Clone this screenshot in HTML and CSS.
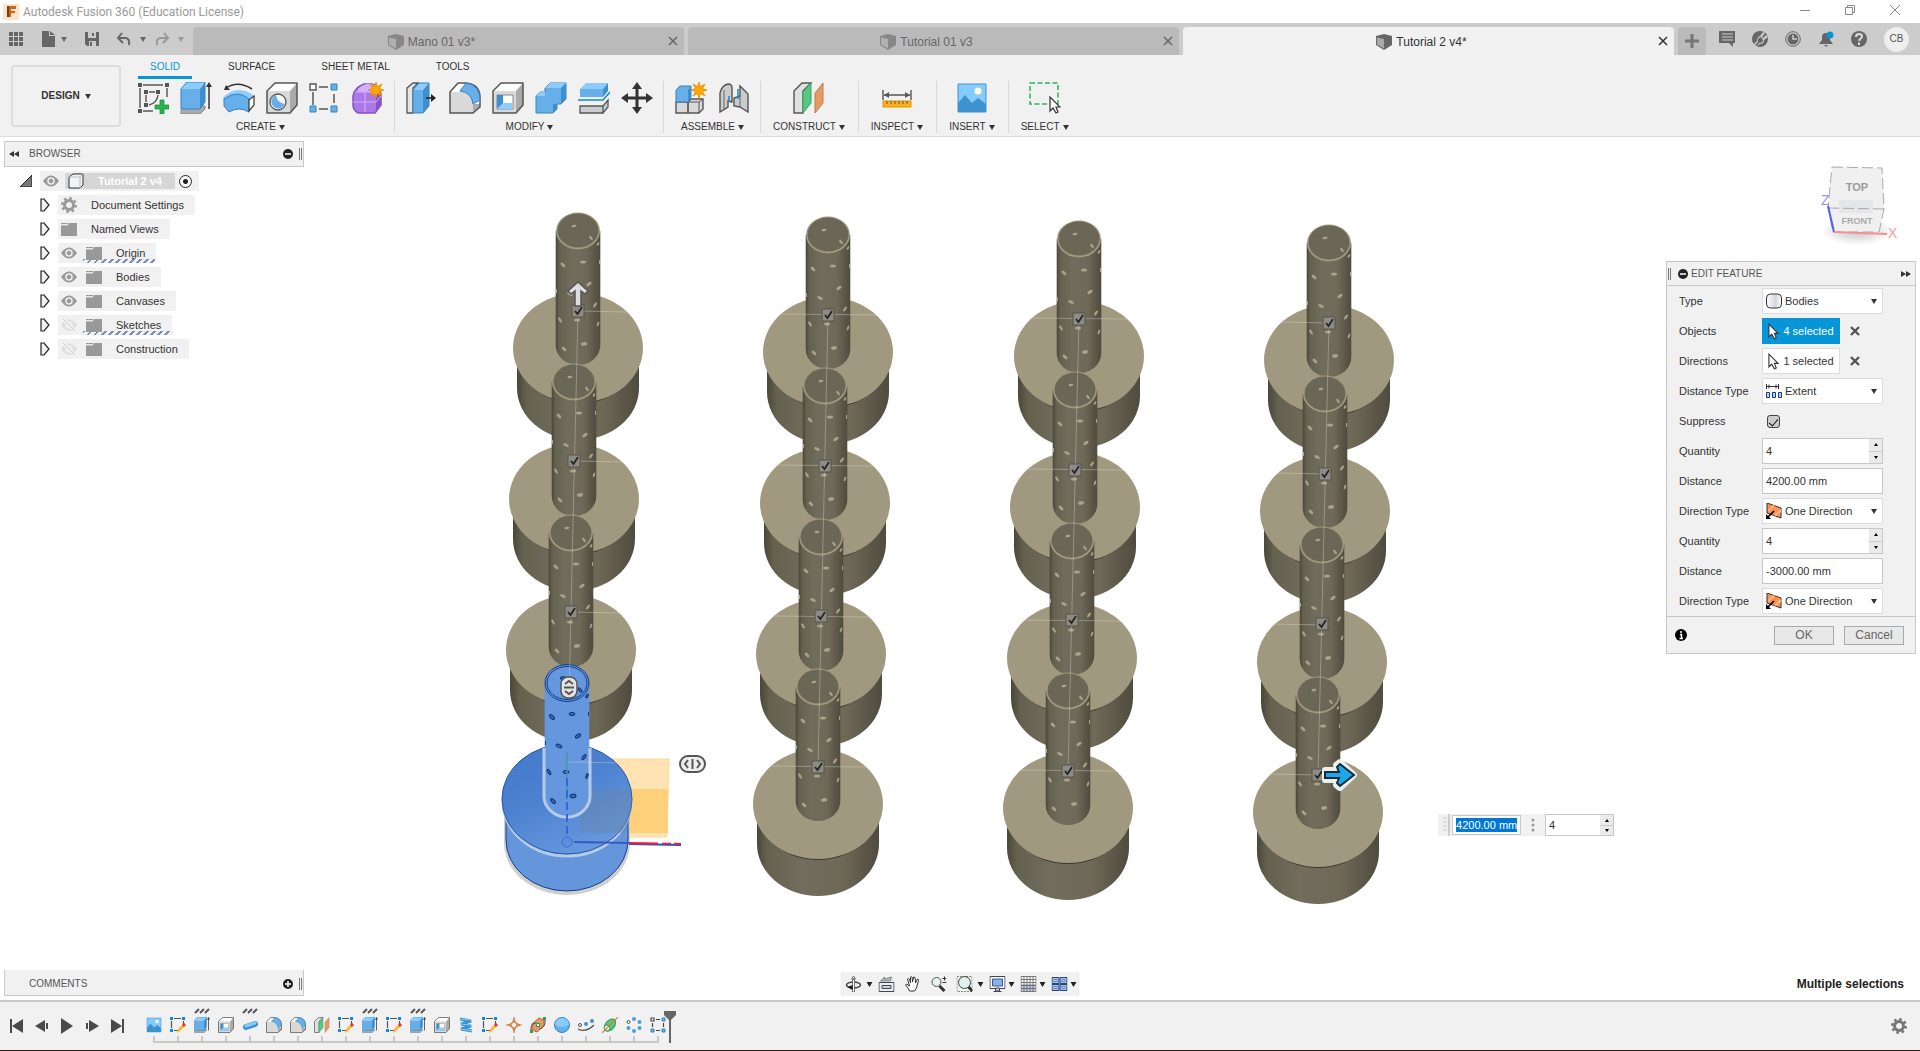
FILE: index.html
```html
<!DOCTYPE html>
<html lang="en">
<head>
<meta charset="utf-8">
<title>Autodesk Fusion 360 (Education License)</title>
<link rel="stylesheet" href="styles.css">
</head>
<body>
<svg class="defs" aria-hidden="true">
  <defs>
    <linearGradient id="wall"><stop offset="0" stop-color="#4a473a"/><stop offset=".08" stop-color="#65614f"/><stop offset=".35" stop-color="#716d5d"/><stop offset=".7" stop-color="#6e6857"/><stop offset="1" stop-color="#4f4b3e"/></linearGradient>
    <linearGradient id="blueTop" x2=".6" y2="1"><stop offset="0" stop-color="#4178c8"/><stop offset=".5" stop-color="#4c82d0"/><stop offset="1" stop-color="#6798df"/></linearGradient>
    <linearGradient id="greyBody"><stop offset="0" stop-color="#fff"/><stop offset=".6" stop-color="#d3d6da"/><stop offset="1" stop-color="#fff"/></linearGradient>
    <radialGradient id="cubeShade"><stop offset="0" stop-color="#888" stop-opacity=".5"/><stop offset="1" stop-color="#888" stop-opacity="0"/></radialGradient>
  </defs>
  <symbol id="i-cube" viewBox="0 0 16 16"><path d="M0 2 8 0l8 2v9l-8 5-8-5z" fill="#666"/><path d="M1 3.500 8 5v9.500L1 10.500z" fill="#aaa"/></symbol>
  <symbol id="i-x" viewBox="0 0 10 10"><path d="M1 1l8 8M9 1 1 9" stroke="currentColor" stroke-width="1.500"/></symbol>
  <symbol id="i-xbold" viewBox="0 0 10 10"><path d="M1 1l8 8M9 1 1 9" stroke="#555" stroke-width="2.400"/></symbol>
  <symbol id="i-caret" viewBox="0 0 6 5"><path d="M0 0h6L3 5z" fill="currentColor"/></symbol>
  <symbol id="i-up" viewBox="0 0 4 3"><path d="M0 3h4L2 0z" fill="#000"/></symbol>
  <symbol id="i-down" viewBox="0 0 4 3"><path d="M0 0h4L2 3z" fill="#000"/></symbol>
  <symbol id="i-sketch" viewBox="0 0 32 32"><path d="M3 6v20M30 6v9M6 3h20M6 29h10" fill="none" stroke="#555" stroke-width="1.400"/><path d="M1 1h4v4H1zM28 1h4v4h-4zM1 27h4v4H1zM7 8h4v4H7zM19 8h4v4h-4zM7 21h4v4H7z" fill="#555"/><path d="M9 13v7M12 10h6M21 13q-1 8-9 10" fill="none" stroke="#555" stroke-width="1.400"/><path d="M23 18h4v5h5v4h-5v5h-4v-5h-5v-4h5z" fill="#29b352" stroke="#148a38" stroke-width=".7"/></symbol>
  <symbol id="i-extrude" viewBox="0 0 32 32"><path d="M1 28l4-4h20v3l-5 5H1z" fill="#aaa" stroke="#888"/><path d="M1 7l6-7h18l-5 7z" fill="#8cccff"/><path d="M1 7h19v20H1z" fill="#66afe8"/><path d="M20 7l5-7v20l-5 7z" fill="#3d8fcf"/><path d="M1 7l6-7h18v20l-5 7H1z" fill="none" stroke="#3683bd"/><path d="M29 4v23" stroke="#333" stroke-width="1.500"/><path d="M29 0l3 5h-6z" fill="#333"/></symbol>
  <symbol id="i-revolve" viewBox="0 0 32 32"><path d="M3 6q12-8 26 1" fill="none" stroke="#333" stroke-width="1.500"/><path d="M1 8l2-5 4 5z" fill="#333"/><path d="M0 16q7-8 16-8t16 7l-5 7-11-2-11 9z" fill="#8cccff"/><path d="M1 17q14-10 25 0v13q-10-6-20 0l-5-6z" fill="#66afe8" stroke="#3683bd"/><path d="M26 18l5-4v9l-5 6z" fill="#fff" stroke="#444" stroke-width="1.300"/></symbol>
  <symbol id="i-box" viewBox="0 0 32 32"><path d="M1 9l8-8h22l-6 8z" fill="#fff"/><path d="M1 9h23v22H1z" fill="#d9d9d9"/><path d="M24 9l7-8v22l-7 8z" fill="#aaa"/><path d="M1 9l8-8h22v22l-7 8H1z" fill="none" stroke="#555" stroke-width="1.500" stroke-linejoin="round"/></symbol>
  <symbol id="i-hole" viewBox="0 0 32 32"><use href="#i-box"/><circle cx="12" cy="20" r="8" fill="#f8f8f8" stroke="#555" stroke-width="1.300"/><path d="M10 13a7 7 0 1 0 9 9q-8-1-9-9z" fill="#66afe8"/></symbol>
  <symbol id="i-pattern" viewBox="0 0 32 32"><path d="M10 5h9M4 10v13M10 27h9M25 12v9" stroke="#555" stroke-width="1.500"/><path d="M1 2h6v6H1z" fill="#fff" stroke="#555" stroke-width="1.400"/><path d="M22 2h6v6h-6zM1 24h6v6H1zM22 24h6v6h-6z" fill="#66afe8" stroke="#3683bd"/></symbol>
  <symbol id="i-pattern16" viewBox="0 0 16 16"><path d="M6 2.500h4M2.500 6v4M6 13.500h4M13.500 6v4" stroke="#444" stroke-width="1.200"/><path d="M1 1h3v3H1z" fill="#fff" stroke="#444" stroke-width="1.200"/><path d="M12 1h3v3h-3zM1 12h3v3H1zM12 12h3v3h-3z" fill="#66afe8" stroke="#3683bd"/></symbol>
  <symbol id="i-form" viewBox="0 0 32 32"><path d="M1 14Q2 6 12 2h8q9 3 9 10v11l-6 8H6q-5-3-5-8z" fill="#ab79e6" stroke="#8753c2" stroke-width="1.500"/><path d="M6 7q6-6 14-5l5 3-6 5H6z" fill="#d3aeff"/><path d="M24 11l5-2v13l-5 8z" fill="#8753c2"/><path d="M1 20h23l5-6M13 10v20M3 10h20" stroke="#d3aeff" fill="none"/><use href="#i-star" x="16" y="0" width="16" height="16"/></symbol>
  <symbol id="i-star" viewBox="0 0 16 16"><path d="M8 0l1.500 4.500L14 2l-2.500 4.500L16 8l-4.500 1.500L14 14l-4.500-2.500L8 16l-1.500-4.500L2 14l2.500-4.500L0 8l4.500-1.500L2 2l4.500 2.500z" fill="#ffa500" stroke="#dc8900" stroke-width=".7"/></symbol>
  <symbol id="i-press" viewBox="0 0 32 32"><path d="M1 6l6-5h5L7 6v25H1z" fill="#e6e6e6" stroke="#555" stroke-width="1.300"/><path d="M7 8l6-7h10l-6 7z" fill="#8cccff"/><path d="M7 8h10v23H7z" fill="#66afe8"/><path d="M17 8l6-7v23l-6 7z" fill="#3d8fcf"/><path d="M7 8l6-7h10v23l-6 7H7z" fill="none" stroke="#3683bd"/><path d="M20 16h7" stroke="#222" stroke-width="1.500"/><path d="M25 12l5 4-5 4z" fill="#222"/></symbol>
  <symbol id="i-fillet" viewBox="0 0 32 32"><path d="M1 10l8-9h8q14 1 14 15v9l-6 6H1z" fill="#fff"/><path d="M1 10h10q13 2 13 12v9H1z" fill="#d9d9d9"/><path d="M24 22h7v3l-7 6z" fill="#aaa"/><path d="M1 10l8-9h8q14 1 14 15v9l-7 6H1z" fill="none" stroke="#555" stroke-width="1.500"/><path d="M17 1q14 2 14 17l-7 4Q23 11 11 9z" fill="#66afe8" stroke="#3683bd"/></symbol>
  <symbol id="i-shell" viewBox="0 0 32 32"><use href="#i-box"/><path d="M5 13h16v14H5z" fill="#fff" stroke="#888"/><path d="M5 13h6v9l-6 5z" fill="#3d8fcf"/><path d="M11 21h9v6H5z" fill="#8cccff"/></symbol>
  <symbol id="i-combine" viewBox="0 0 32 32"><path d="M10 6l5-5h16v16l-5 5h-4v5l-4 4H1V14l4-4h5z" fill="#66afe8" stroke="#3683bd"/><path d="M10 6l5-5h16l-5 5zM1 14l4-4h5v4z" fill="#8cccff"/><path d="M26 6l5-5v16l-5 5zM18 22h4v5l-4 4z" fill="#3d8fcf"/></symbol>
  <symbol id="i-split" viewBox="0 0 32 32"><path d="M2 24h23v7H2zM25 24l5-6v7l-5 6z" fill="#ccc" stroke="#555" stroke-width="1.300"/><path d="M0 18h25l7-8" fill="none" stroke="#0c8ce0" stroke-width="1.500"/><path d="M2 7l6-6h22l-5 6z" fill="#8cccff"/><path d="M2 7h23v8H2z" fill="#66afe8"/><path d="M25 7l5-6v8l-5 6z" fill="#3d8fcf"/></symbol>
  <symbol id="i-move" viewBox="0 0 32 32"><path d="M16 4v24M4 16h24" stroke="#333" stroke-width="3"/><path d="M16 0l5 7H11zM16 32l5-7H11zM0 16l7-5v10zM32 16l-7-5v10z" fill="#333"/></symbol>
  <symbol id="i-component" viewBox="0 0 32 32"><path d="M1 20h12v11H1zM13 20l3-3h12v10l-4 4H13z" fill="#d9d9d9" stroke="#555" stroke-width="1.400"/><path d="M13 20h11v11M24 20l4-3M13 20v11" fill="none" stroke="#555"/><path d="M1 8l4-4h11v11l-3 5H1z" fill="#66afe8" stroke="#3683bd"/><path d="M13 8l3-4v11l-3 5z" fill="#3d8fcf"/><use href="#i-star" x="16" y="0" width="16" height="16"/></symbol>
  <symbol id="i-joint" viewBox="0 0 32 32"><path d="M2 11Q4 3 10 2q4 0 4 4v14l-4-1v6l-8 5zM30 12l-8-8v10l-6 2v8l6 1 8 5z" fill="#ccc" stroke="#555" stroke-width="1.400"/><path d="M6 8v20M22 14v11" stroke="#666"/><path d="M11 14v6M20 7v10" stroke="#0c8ce0" stroke-width="1.500"/></symbol>
  <symbol id="i-plane" viewBox="0 0 32 32"><path d="M1 9l8-8h9l-8 8v22H1z" fill="#e0e0e0" stroke="#555" stroke-width="1.400"/><path d="M10 10l8-9v20l-8 10z" fill="#57c881" stroke="#38a565"/><path d="M22 11l8-10v20l-8 10z" fill="#e59963" stroke="#c97a42"/></symbol>
  <symbol id="i-measure" viewBox="0 0 32 32"><path d="M2 8v10M30 8v10M3 13h26" stroke="#555" stroke-width="1.400"/><path d="M3 13l5-3v6zM29 13l-5-3v6z" fill="#555"/><path d="M2 19h28v6H2z" fill="#ffb11c" stroke="#e39400"/><path d="M6 19v3M10 19v3M14 19v3M18 19v3M22 19v3M26 19v3" stroke="#555"/></symbol>
  <symbol id="i-image" viewBox="0 0 32 32"><path d="M2 2h28v28H2z" fill="#84ccff"/><path d="M2 21l7-8 7 8 6-5 8 6v8H2z" fill="#3d92cf"/><circle cx="22" cy="9" r="3.500" fill="#ffffd0"/><path d="M2 2h28v28H2z" fill="none" stroke="#3d92cf"/></symbol>
  <symbol id="i-cursor" viewBox="0 0 12 18"><path d="M1 1v14l3-3 3 5 2-1-2-5h4z" fill="#fff" stroke="#333" stroke-width="1.200"/></symbol>
  <symbol id="i-select" viewBox="0 0 32 32"><path d="M1 1h28v21H1z" fill="none" stroke="#2bb35b" stroke-width="1.500" stroke-dasharray="5 2.500"/><use href="#i-cursor" x="20" y="14" width="12" height="18"/></symbol>
  <symbol id="i-eye" viewBox="0 0 16 12"><path d="M0 6q8-11 16 0-8 11-16 0z" fill="#999"/><circle cx="8" cy="6" r="3" fill="none" stroke="#eee" stroke-width="1.500"/></symbol>
  <symbol id="i-eyeoff" viewBox="0 0 16 12"><path d="M0 6q8-11 16 0-8 11-16 0z" fill="#ddd"/><circle cx="8" cy="6" r="3" fill="none" stroke="#f4f4f4" stroke-width="1.500"/><path d="M2 0l12 12" stroke="#f1f1f1" stroke-width="3"/><path d="M2 0l12 12" stroke="#ccc"/></symbol>
  <symbol id="i-folder" viewBox="0 0 16 13"><path d="M0 0h7v1H0zM0 2h7l1-2h8v13H0z" fill="#999"/><path d="M0 2h7" stroke="#ddd"/></symbol>
  <symbol id="i-gear" viewBox="0 0 16 16"><circle cx="8" cy="8" r="4.500" fill="none" stroke="currentColor" stroke-width="3"/><circle cx="8" cy="8" r="6.700" fill="none" stroke="currentColor" stroke-width="2.600" stroke-dasharray="2.600 2.660"/></symbol>
  <symbol id="i-tri" viewBox="0 0 10 14"><path d="M1 1h3l5 6-5 6H1z" fill="#f0f0f0" stroke="#222" stroke-width="1.200"/></symbol>
  <symbol id="i-edit" viewBox="0 0 16 16"><path d="M4 1.500h7M1.500 4v7M13.500 4v4M4 13.500h4" fill="none" stroke="#555" stroke-width="1.200"/><path d="M0 0h3v3H0zM12 0h3v3h-3zM0 12h3v3H0z" fill="#0c8ce0"/><path d="M7 16l1-4 5-5 2 2-5 5z" fill="#ffb534"/><path d="M12 8l2-2 2 2-2 2z" fill="#e33"/></symbol>
  <symbol id="i-marks" viewBox="0 0 16 6"><path d="M1 5l4-4M6 5l4-4M11 5l4-4" stroke="#555" stroke-width="2"/></symbol>
  <symbol id="i-pipe" viewBox="0 0 16 16"><path d="M4 10l9-3" stroke="#3d8fcf" stroke-width="6" stroke-linecap="round"/><path d="M4 9l9-3" stroke="#84ccff" stroke-width="3" stroke-linecap="round"/></symbol>
  <symbol id="i-coil" viewBox="0 0 16 16"><path d="M2 2l11 2L3 7l10 2-10 3 11 2" fill="none" stroke="#3d92cf" stroke-width="3"/><path d="M2 2l11 1M3 7l10 1M3 12l11 2" stroke="#84ccff" stroke-width="1.200"/></symbol>
  <symbol id="i-point" viewBox="0 0 16 16"><path d="M8 0v16M0 8h16" stroke="#c97a42" stroke-width="1.200"/><path d="M8 2l2 4 4 2-4 2-2 4-2-4-4-2 4-2z" fill="#e59963" stroke="#c97a42"/><circle cx="8" cy="8" r="2" fill="#fff"/></symbol>
  <symbol id="i-oplane" viewBox="0 0 16 16"><path d="M2 7l7-6 5 2v6l-7 6-5-2z" fill="#e59963" stroke="#b8682f"/><path d="M1 14Q0 6 7 6M15 2q1 9-6 10" fill="none" stroke="#555"/><path d="M0 13h3v3H0zM13 0h3v3h-3zM6 6h4v4H6z" fill="#29a352"/><path d="M7 7h2v2H7z" fill="#fff"/></symbol>
  <symbol id="i-sphere" viewBox="0 0 16 16"><circle cx="8" cy="8" r="7.500" fill="#66afe8" stroke="#3683bd"/><path d="M1 8a7 7 0 0 1 14 0q-7 4-14 0z" fill="#84ccff"/></symbol>
  <symbol id="i-path" viewBox="0 0 16 16"><path d="M0 12q8 4 16-4" fill="none" stroke="#555" stroke-width="1.300"/><circle cx="2" cy="8" r="1.500" fill="none" stroke="#555"/><circle cx="8" cy="7" r="2" fill="#3d92cf"/><circle cx="14" cy="4" r="2" fill="#3d92cf"/></symbol>
  <symbol id="i-green" viewBox="0 0 16 16"><ellipse cx="8" cy="8" rx="7" ry="4.500" transform="rotate(-50 8 8)" fill="#57c881" stroke="#2b9c57"/><circle cx="5" cy="11" r="3" fill="#eee" stroke="#2b9c57"/><path d="M0 16L16 0" stroke="#e07a35" stroke-width="1.200"/></symbol>
  <symbol id="i-circ" viewBox="0 0 16 16"><g fill="#4d9fdb"><circle cx="8" cy="2" r="2"/><circle cx="13.500" cy="5" r="2"/><circle cx="13.500" cy="11" r="2"/><circle cx="8" cy="14" r="2"/><circle cx="2.500" cy="11" r="2"/></g><circle cx="2.500" cy="5" r="1.500" fill="#fff" stroke="#555"/></symbol>
  <symbol id="i-dir" viewBox="0 0 16 16"><path d="M1 0l14 5v10L1 10z" fill="#ff9250" stroke="#333"/><path d="M2 7l5-5 2 1-7 6zM8 12l7-6v3l-5 4z" fill="#ffb787"/><path d="M2 14l6-6" stroke="#000" stroke-width="1.700"/><path d="M0 16v-5l5 5z" fill="#000"/></symbol>
</svg>

<div class="app">
  <header class="titlebar">
    <svg class="ic16" viewBox="0 0 16 16"><path d="M0 0h16v16H0z" fill="#fbe3cc"/><path d="M4 2h9v3H8v2h4v2H8v4H4z" fill="#c7691b"/><path d="M4 2h2v11H4z" fill="#7d3b0d"/></svg>
    <span class="app-name">Autodesk Fusion 360 (Education License)</span>
    <button class="win" aria-label="Minimize"><svg class="ic10" viewBox="0 0 10 10"><path d="M0 5.500h10" stroke="#888"/></svg></button>
    <button class="win" aria-label="Restore"><svg class="ic10" viewBox="0 0 10 10"><path d="M.5 2.500h7v7h-7zM2.500 2.500v-2h7v7h-2" fill="none" stroke="#888"/></svg></button>
    <button class="win" aria-label="Close"><svg class="ic10" viewBox="0 0 10 10"><path d="M0 0l10 10M10 0L0 10" stroke="#888"/></svg></button>
  </header>

  <nav class="tabbar">
    <div class="quick">
      <button aria-label="Data panel"><svg class="ic16" viewBox="0 0 16 16"><path d="M1 1h4v4H1zM6 1h4v4H6zM11 1h4v4h-4zM1 6h4v4H1zM6 6h4v4H6zM11 6h4v4h-4zM1 11h4v4H1zM6 11h4v4H6zM11 11h4v4h-4z" fill="#666"/></svg></button>
      <button class="drop file" aria-label="File"><svg class="ic16" viewBox="0 0 16 16"><path d="M2 0h7v5h6v11H2zM10 0l5 4h-5z" fill="#666"/></svg><svg class="caret"><use href="#i-caret"/></svg></button>
      <button aria-label="Save"><svg class="ic16" viewBox="0 0 16 16"><path d="M1 1h14v14H3l-2-2z" fill="#666"/><path d="M4 1h8v6H4zM5 10h7v5H5z" fill="#ccc"/><path d="M8 2h2v3H8zM6 11h2v4H6z" fill="#666"/></svg></button>
      <button class="drop" aria-label="Undo"><svg class="ic16" viewBox="0 0 16 16"><path d="M2 7h7q5 0 4 7M6 2L2 7l5 5" fill="none" stroke="#666" stroke-width="2"/></svg><svg class="caret"><use href="#i-caret"/></svg></button>
      <button class="drop faded" aria-label="Redo"><svg class="ic16" viewBox="0 0 16 16"><path d="M14 7H7q-5 0-4 7M10 2l4 5-5 5" fill="none" stroke="#666" stroke-width="2"/></svg><svg class="caret"><use href="#i-caret"/></svg></button>
    </div>
    <div class="tabs">
      <div class="tab"><a href="#mano"><svg class="ic16"><use href="#i-cube"/></svg>Mano 01 v3*</a><button aria-label="Close Mano 01 v3"><svg class="ic10"><use href="#i-x"/></svg></button></div>
      <div class="tab"><a href="#tutorial1"><svg class="ic16"><use href="#i-cube"/></svg>Tutorial 01 v3</a><button aria-label="Close Tutorial 01 v3"><svg class="ic10"><use href="#i-x"/></svg></button></div>
      <div class="tab current"><a href="#tutorial2"><svg class="ic16"><use href="#i-cube"/></svg>Tutorial 2 v4*</a><button aria-label="Close Tutorial 2 v4"><svg class="ic10"><use href="#i-x"/></svg></button></div>
      <button class="new" aria-label="New tab"><svg width="14" height="14" viewBox="0 0 14 14"><path d="M7 0v14M0 7h14" stroke="#777" stroke-width="3"/></svg></button>
    </div>
    <div class="status">
      <button aria-label="Comments"><svg class="ic16" viewBox="0 0 16 16"><path d="M0 0h16v12h-2v4l-4-4H0z" fill="#666"/><path d="M3 3h11M3 6h11M3 9h11" stroke="#ccc"/></svg></button>
      <button aria-label="Extensions"><svg class="ic16" viewBox="0 0 16 16"><circle cx="8" cy="8" r="8" fill="#666"/><path d="M1 14l4-4Q5 6 8 5l3-4 2 1-3 4 1 1 3-3 2 2-4 3q0 4-4 4l-3 2 1 2z" fill="#ccc"/><path d="M3 14l3-3q-1-4 3-5l2 3q0 3-4 3l-2 3z" fill="#666"/></svg></button>
      <button aria-label="Job status"><svg class="ic16" viewBox="0 0 16 16"><circle cx="8" cy="8" r="7.300" fill="none" stroke="#666"/><circle cx="8" cy="8" r="5.500" fill="#666"/><path d="M8 4v4h4" fill="none" stroke="#ccc" stroke-width="1.500"/></svg></button>
      <button aria-label="Notifications"><svg class="ic16" viewBox="0 0 16 16"><path d="M1 13l3-4V6q0-4 4-4t4 4v3l3 4zM6 14h4l-2 2z" fill="#666"/><circle cx="12" cy="4" r="3.500" fill="#0696d7"/></svg></button>
      <button aria-label="Help"><svg class="ic16" viewBox="0 0 16 16"><circle cx="8" cy="8" r="8" fill="#666"/><path d="M5 6q0-3 3-3t3 2.500Q11 7 8.500 8.500V10M8 11.500V14" fill="none" stroke="#ddd" stroke-width="2"/></svg></button>
      <button class="avatar">CB</button>
    </div>
  </nav>

  <section class="ribbon">
    <button class="workspace">DESIGN <svg class="caret"><use href="#i-caret"/></svg></button>
    <div class="ribbon-main">
      <div class="modes"><a class="on" href="#solid">SOLID</a><a href="#surface">SURFACE</a><a href="#sheet">SHEET METAL</a><a href="#tools">TOOLS</a></div>
      <div class="groups">
        <div class="group first">
          <div class="icons"><svg class="ic32"><use href="#i-sketch"/></svg><svg class="ic32"><use href="#i-extrude"/></svg><svg class="ic32"><use href="#i-revolve"/></svg><svg class="ic32"><use href="#i-hole"/></svg><svg class="ic32"><use href="#i-pattern"/></svg><svg class="ic32"><use href="#i-form"/></svg></div>
          <button>CREATE<svg class="caret"><use href="#i-caret"/></svg></button>
        </div>
        <div class="group">
          <div class="icons"><svg class="ic32"><use href="#i-press"/></svg><svg class="ic32"><use href="#i-fillet"/></svg><svg class="ic32"><use href="#i-shell"/></svg><svg class="ic32"><use href="#i-combine"/></svg><svg class="ic32"><use href="#i-split"/></svg><svg class="ic32"><use href="#i-move"/></svg></div>
          <button>MODIFY<svg class="caret"><use href="#i-caret"/></svg></button>
        </div>
        <div class="group">
          <div class="icons"><svg class="ic32"><use href="#i-component"/></svg><svg class="ic32"><use href="#i-joint"/></svg></div>
          <button>ASSEMBLE<svg class="caret"><use href="#i-caret"/></svg></button>
        </div>
        <div class="group single"><div class="icons"><svg class="ic32"><use href="#i-plane"/></svg></div><button>CONSTRUCT<svg class="caret"><use href="#i-caret"/></svg></button></div>
        <div class="group single"><div class="icons"><svg class="ic32"><use href="#i-measure"/></svg></div><button>INSPECT<svg class="caret"><use href="#i-caret"/></svg></button></div>
        <div class="group single"><div class="icons"><svg class="ic32"><use href="#i-image"/></svg></div><button>INSERT<svg class="caret"><use href="#i-caret"/></svg></button></div>
        <div class="group single last"><div class="icons"><svg class="ic32"><use href="#i-select"/></svg></div><button>SELECT<svg class="caret"><use href="#i-caret"/></svg></button></div>
      </div>
    </div>
  </section>

  <main class="canvas">
    <svg class="scene" viewBox="0 137 1920 863" role="img" aria-label="Patterned cylinder bodies">
      <defs>
        <g id="holes"><ellipse cx="-15" cy="34" rx="3" ry="1.500" transform="rotate(45 -15 34)"/><ellipse cx="5" cy="31" rx="3" ry="1.500"/><ellipse cx="11" cy="53" rx="3" ry="1.500" transform="rotate(-35 11 53)"/><ellipse cx="-8" cy="63" rx="3" ry="1.500" transform="rotate(25 -8 63)"/><ellipse cx="17" cy="74" rx="3" ry="1.200" transform="rotate(-55 17 74)"/><ellipse cx="-18" cy="89" rx="3" ry="1.200" transform="rotate(60 -18 89)"/><ellipse cx="-1" cy="89" rx="3" ry="1.500"/><ellipse cx="20" cy="93" rx="2.500" ry="1" transform="rotate(-70 20 93)"/><ellipse cx="-14" cy="118" rx="3" ry="1.500" transform="rotate(45 -14 118)"/><ellipse cx="6" cy="113" rx="3" ry="1.800" transform="rotate(-10 6 113)"/><ellipse cx="-4" cy="-5" rx="2.500" ry="1.200" transform="rotate(-10 -4 -5)"/><ellipse cx="13" cy="7" rx="2.500" ry="1.200" transform="rotate(50 13 7)"/><ellipse cx="20" cy="13" rx="2" ry="1" transform="rotate(-60 20 13)"/><path d="M21.500 29v4M-21.500 58v4" stroke="currentColor"/></g>
        <g id="body">
          <path d="M-61 125v32a61 52 0 0 0 122 0v-32z" fill="url(#wall)"/>
          <ellipse cy="119" rx="62" ry="54" fill="#3b392f"/>
          <ellipse cy="117" rx="65" ry="55" fill="#a1997f"/>
          <path d="M-22.300 0v114a22.300 20 0 0 0 44.600 0V0z" fill="url(#wall)"/>
          <ellipse rx="22" ry="18.500" fill="#a1997f"/><ellipse cy="-.5" rx="20.500" ry="17" fill="#6b6757"/>
          <use href="#holes" fill="#aaa389" color="#aaa389"/>
        </g>
        <g id="tick"><path d="M-6-6H6V6H-6z" fill="#8d8b84" stroke="#55534c"/><path d="M-3 0l2.500 3L4-4" fill="none" stroke="#222" stroke-width="1.700"/></g>
      </defs>
      <use href="#body" x="578" y="231"/><use href="#body" x="828" y="235"/><use href="#body" x="1079" y="239"/><use href="#body" x="1329" y="243"/>
      <use href="#body" x="574" y="382"/><use href="#body" x="825" y="386"/><use href="#body" x="1075" y="390"/><use href="#body" x="1325" y="394"/>
      <use href="#body" x="571" y="533"/><use href="#body" x="821" y="537"/><use href="#body" x="1072" y="541"/><use href="#body" x="1322" y="545"/>
      <use href="#body" x="818" y="687"/><use href="#body" x="1068" y="691"/><use href="#body" x="1318" y="695"/>

      <path d="M578 759h91l-2 78h-87z" fill="#ffe3b3" stroke="#ffd795"/><path d="M580 789h88v44h-88z" fill="#ffd07c"/>
      <g transform="translate(567 683)">
        <path d="M-63 128v32a63 52 0 0 0 126 0v-32z" fill="#cfcfcf"/>
        <path d="M-61 125v32a61 51 0 0 0 122 0v-32z" fill="#6595db" stroke="#123f87"/>
        <ellipse cy="118" rx="64" ry="55" fill="#6595db" stroke="#b7cbe8" stroke-width="3"/>
        <ellipse cy="116" rx="65" ry="55" fill="url(#blueTop)" stroke="#275aa9"/>
        <path d="M13 106h50q5 18-5 44H13z" fill="#6886a8" opacity=".45"/>
        <path d="M-22.300 0v112a22.300 20 0 0 0 44.600 0V0z" fill="#6597df"/>
        <path d="M-23 65v48a23 21 0 0 0 46 0V65" fill="none" stroke="#b7cbe8" stroke-width="3"/>
        <ellipse rx="22" ry="18.500" fill="#5a8fdd" stroke="#123f87"/><ellipse rx="20" ry="16.500" fill="#6597df" stroke="#123f87"/>
        <use href="#holes" fill="#376db9" color="#123f87" stroke="#0c3270"/>
        <path d="M0 69v48" stroke="#4597a4" stroke-width="1.500"/><path d="M0 95v60" stroke="#3268d2" stroke-width="2" stroke-dasharray="8 4"/>
        <path d="M7 159l56 1" stroke="#3559c5" stroke-width="2"/><path d="M62 161l52 1" stroke="#2355c7" stroke-width="2"/><path d="M62 160l52 1" stroke="#e2203b" stroke-width="2" stroke-dasharray="29 4 9 3"/>
        <circle cy="159" r="5" fill="#5d8fe0" stroke="#3c6fcb"/>
      </g>
      <g stroke="#d8d5cb" stroke-opacity=".4" fill="none"><path d="M578 311l-9 385M828 315l-10 452M1079 319l-11 452M1329 323l-11 452"/><path d="M578 311l50 1M778 314l99 1M1029 318l99 1M1279 322l50 1M575 461l50 1M775 465l98 1M1025 469l98 1M1276 473l50 1M571 612l50 1M772 616l98 1M1022 620l98 1M1272 624l50 1M567 762l62 1M768 766l98 1M1018 770l98 1M1269 774l50 1"/></g>
      <use href="#tick" x="578" y="311"/><use href="#tick" x="828" y="315"/><use href="#tick" x="1079" y="319"/><use href="#tick" x="1329" y="323"/>
      <use href="#tick" x="574" y="461"/><use href="#tick" x="825" y="466"/><use href="#tick" x="1075" y="470"/><use href="#tick" x="1325" y="474"/>
      <use href="#tick" x="571" y="612"/><use href="#tick" x="821" y="616"/><use href="#tick" x="1072" y="620"/><use href="#tick" x="1322" y="624"/>
      <use href="#tick" x="818" y="767"/><use href="#tick" x="1068" y="771"/><use href="#tick" x="1318" y="775"/>
      <path d="M578 282l10 9-3 3-4-3v15h-6v-15l-4 3-3-3z" fill="#ddd" stroke="#555" stroke-width="1.500"/>
      <g fill="#e4e4e4" stroke="#555" stroke-width="1.500"><rect x="561" y="677" width="16" height="21" rx="7"/><path d="M565 684l4-3 4 3M565 691l4 3 4-3M564 687.500h10" fill="none" stroke-width="2"/></g>
      <g fill="#eee" stroke="#555" stroke-width="2"><rect x="680" y="756" width="25" height="16" rx="8"/><path d="M688 760l-3 4 3 4M697 760l3 4-3 4M692.500 759v10" fill="none"/></g>
      <path d="M1325 770h12l-1-5 4-3 14 13-14 13-4-3 1-5h-12z" fill="#1aa8ea" stroke="#eee" stroke-width="6" stroke-linejoin="round"/><path d="M1325 772h14l-2-5 3-3 14 11-14 11-3-3 2-5h-14z" fill="#1aa8ea" stroke="#112b38" stroke-width="2"/>

      <ellipse cx="1857" cy="231" rx="36" ry="14" fill="url(#cubeShade)"/>
      <path d="M1832 167l50 1 2 41-5 23-46 1-5-24z" fill="#f0f0f0"/><path d="M1839 200h34v13h-34z" fill="#e4e6ea"/>
      <path d="M1832 167l50 1 2 41-5 23h-46l-5-24zM1828 208l56 1" fill="none" stroke="#aaa" stroke-dasharray="11 4"/>
      <path d="M1828 206l6 26" stroke="#5a5af0" stroke-width="2"/><path d="M1834 232l53 2" stroke="#f59090" stroke-width="2"/>
      <text class="cube-top" x="1857" y="191">TOP</text><text class="cube-front" x="1857" y="224">FRONT</text><text class="axis-z" x="1821" y="205">Z</text><text class="axis-x" x="1888" y="238">X</text>
    </svg>

    <aside class="browser">
      <header class="palette"><svg width="10" height="6" viewBox="0 0 10 6"><path d="M0 3l5-3v6zM5 3l5-3v6z" fill="#333"/></svg><h2>BROWSER</h2><svg class="dot" viewBox="0 0 10 10"><circle cx="5" cy="5" r="5" fill="#222"/><path d="M2 5h6" stroke="#fff" stroke-width="1.500"/></svg><i class="grip"></i></header>
      <ul class="tree">
        <li class="root"><svg width="12" height="12" viewBox="0 0 12 12"><path d="M12 0v12H0z" fill="#777" stroke="#222"/></svg><div class="chip"><svg class="eye"><use href="#i-eye"/></svg><span class="doc"><svg class="ic16" viewBox="0 0 16 16"><path d="M1 4l4-3h10v11l-3 3H1z" fill="#f2f3f5" stroke="#333" stroke-linejoin="round"/><path d="M1 4h11v11M12 4l3-3" fill="none" stroke="#bbb"/></svg><b>Tutorial 2 v4</b></span><input type="radio" checked aria-label="Activate component"></div></li>
        <li><svg class="tri"><use href="#i-tri"/></svg><div class="chip"><svg class="ic16 grey"><use href="#i-gear"/></svg><span>Document Settings</span></div></li>
        <li><svg class="tri"><use href="#i-tri"/></svg><div class="chip"><svg class="folder"><use href="#i-folder"/></svg><span>Named Views</span></div></li>
        <li><svg class="tri"><use href="#i-tri"/></svg><div class="chip"><svg class="eye"><use href="#i-eye"/></svg><div class="item hatched"><svg class="folder"><use href="#i-folder"/></svg><span>Origin</span></div></div></li>
        <li><svg class="tri"><use href="#i-tri"/></svg><div class="chip"><svg class="eye"><use href="#i-eye"/></svg><div class="item"><svg class="folder"><use href="#i-folder"/></svg><span>Bodies</span></div></div></li>
        <li><svg class="tri"><use href="#i-tri"/></svg><div class="chip"><svg class="eye"><use href="#i-eye"/></svg><div class="item"><svg class="folder"><use href="#i-folder"/></svg><span>Canvases</span></div></div></li>
        <li><svg class="tri"><use href="#i-tri"/></svg><div class="chip"><svg class="eye"><use href="#i-eyeoff"/></svg><div class="item hatched"><svg class="folder"><use href="#i-folder"/></svg><span>Sketches</span></div></div></li>
        <li><svg class="tri"><use href="#i-tri"/></svg><div class="chip"><svg class="eye"><use href="#i-eyeoff"/></svg><div class="item"><svg class="folder"><use href="#i-folder"/></svg><span>Construction</span></div></div></li>
      </ul>
    </aside>

    <form class="feature">
      <header class="palette"><i class="grip"></i><svg class="dot" viewBox="0 0 10 10"><circle cx="5" cy="5" r="5" fill="#222"/><path d="M2 5h6" stroke="#fff" stroke-width="1.500"/></svg><h2>EDIT FEATURE</h2><svg width="10" height="6" viewBox="0 0 10 6"><path d="M5 3L0 0v6zM10 3L5 0v6z" fill="#333"/></svg></header>
      <div class="rows">
        <label for="type">Type</label><div class="pick"><svg class="ic16" viewBox="0 0 16 16"><rect x=".5" y="1" width="15" height="14" rx="4" fill="url(#greyBody)" stroke="#333"/></svg><select id="type"><option>Bodies</option></select><svg class="caret"><use href="#i-caret"/></svg></div>
        <label for="objects">Objects</label><div class="selrow"><button type="button" id="objects" class="sel on"><svg width="11" height="17"><use href="#i-cursor"/></svg>4 selected</button><button type="button" aria-label="Clear objects"><svg class="ic10"><use href="#i-xbold"/></svg></button></div>
        <label for="directions">Directions</label><div class="selrow"><button type="button" id="directions" class="sel"><svg width="11" height="17"><use href="#i-cursor"/></svg>1 selected</button><button type="button" aria-label="Clear directions"><svg class="ic10"><use href="#i-xbold"/></svg></button></div>
        <label for="dtype">Distance Type</label><div class="pick"><svg class="ic16" viewBox="0 0 16 16"><path d="M.5 1v5M12.500 1v5M1 3.500h11M3 1.500v4M10 1.500v4" stroke="#333"/><path d="M.5 9.500h3v5h-3zM6.500 9.500h3v5h-3zM12.500 9.500h3v5h-3z" fill="#bcd4f5" stroke="#113a9a"/></svg><select id="dtype"><option>Extent</option></select><svg class="caret"><use href="#i-caret"/></svg></div>
        <label for="suppress">Suppress</label><input id="suppress" class="check" type="checkbox" checked>
        <label for="q1">Quantity</label><div class="spin"><input id="q1" value="4"><div class="steps"><button type="button" aria-label="More"><svg><use href="#i-up"/></svg></button><button type="button" aria-label="Less"><svg><use href="#i-down"/></svg></button></div></div>
        <label for="d1">Distance</label><input id="d1" class="text" value="4200.00 mm">
        <label for="t1">Direction Type</label><div class="pick"><svg class="ic16"><use href="#i-dir"/></svg><select id="t1"><option>One Direction</option></select><svg class="caret"><use href="#i-caret"/></svg></div>
        <label for="q2">Quantity</label><div class="spin"><input id="q2" value="4"><div class="steps"><button type="button" aria-label="More"><svg><use href="#i-up"/></svg></button><button type="button" aria-label="Less"><svg><use href="#i-down"/></svg></button></div></div>
        <label for="d2">Distance</label><input id="d2" class="text" value="-3000.00 mm">
        <label for="t2">Direction Type</label><div class="pick"><svg class="ic16"><use href="#i-dir"/></svg><select id="t2"><option>One Direction</option></select><svg class="caret"><use href="#i-caret"/></svg></div>
      </div>
      <footer><svg width="12" height="12" viewBox="0 0 12 12"><circle cx="6" cy="6" r="6" fill="#000"/><path d="M6 2v2M5 5.500h1.500V9M4.500 9.500h3.500" stroke="#fff" stroke-width="1.500" fill="none"/></svg><button type="button">OK</button><button type="button">Cancel</button></footer>
    </form>

    <div class="mini">
      <svg width="12" height="22" viewBox="0 0 12 22"><path d="M5 3l4 2M5 7l4 2M5 11l4 2M5 15l4 2M9 3L5 5M9 7L5 9M9 11l-4 2M9 15l-4 2" stroke="#ddd"/><path d="M11 0v22" stroke="#ccc" stroke-width="2"/></svg>
      <div class="mini-dist"><input aria-label="Distance" value="4200.00 mm"></div>
      <svg width="4" height="14" viewBox="0 0 4 14"><g fill="#999"><circle cx="2" cy="2" r="1.500"/><circle cx="2" cy="7" r="1.500"/><circle cx="2" cy="12" r="1.500"/></g></svg>
      <div class="spin"><input aria-label="Quantity" value="4"><div class="steps"><button type="button" aria-label="More"><svg><use href="#i-up"/></svg></button><button type="button" aria-label="Less"><svg><use href="#i-down"/></svg></button></div></div>
    </div>

    <aside class="comments palette"><h2>COMMENTS</h2><svg class="dot" viewBox="0 0 10 10"><circle cx="5" cy="5" r="5" fill="#222"/><path d="M2 5h6M5 2v6" stroke="#fff" stroke-width="1.500"/></svg><i class="grip"></i></aside>

    <div class="viewbar">
      <button class="wide" aria-label="Orbit"><svg class="ic16" viewBox="0 0 16 16"><ellipse cx="8" cy="9" rx="7" ry="3" fill="none" stroke="#444" stroke-width="1.500"/><path d="M7 3h2v13H7zM8 0l2 3H6z" fill="#fff" stroke="#555" stroke-width=".8"/><path d="M2 11l5-2v5z" fill="#111"/></svg><svg class="caret"><use href="#i-caret"/></svg></button>
      <button aria-label="Look at"><svg class="ic16" viewBox="0 0 16 16"><path d="M.5 6.500h15v9H.5z" fill="#eee" stroke="#445"/><path d="M3.500 9.500h9v3h-9z" fill="#ccd" stroke="#445"/><path d="M2 5l4-4v2l7-2-1 4z" fill="#bbb" stroke="#667" stroke-width=".7"/></svg></button>
      <button aria-label="Pan"><svg class="ic16" viewBox="0 0 16 16"><path d="M5 15q-1-3-4-6l1-1 3 2-2-7q2-2 3 4V1q2-2 2 5l1-5q2-1 2 6l2-4q2 0 0 5l-1 4-2 3z" fill="#fff" stroke="#333"/></svg></button>
      <button aria-label="Zoom"><svg class="ic16" viewBox="0 0 16 16"><circle cx="6" cy="6" r="4.500" fill="#e5f2f4" stroke="#555"/><path d="M9 10l5 5" stroke="#333" stroke-width="3"/><path d="M12 2.500h4M14 .5v4M12 6.500h4" stroke="#333"/></svg></button>
      <button class="wide" aria-label="Fit"><svg class="ic16" viewBox="0 0 16 16"><path d="M.5.5h15v15H.5z" fill="none" stroke="#888" stroke-dasharray="2 1"/><circle cx="8" cy="6.500" r="6" fill="#e0f0f1" stroke="#444"/><path d="M12 11l4 4" stroke="#333" stroke-width="3"/></svg><svg class="caret"><use href="#i-caret"/></svg></button>
      <button class="mid" aria-label="Display settings"><svg class="ic16" viewBox="0 0 16 16"><path d="M.5.5h15v12H.5z" fill="#fff" stroke="#445"/><path d="M3 3h10v7H3z" fill="#8cb0e3" stroke="#335a99"/><path d="M6 12h4v3H6zM4 15.500h8" fill="#ccc" stroke="#445"/></svg><svg class="caret"><use href="#i-caret"/></svg></button>
      <button class="mid" aria-label="Grid"><svg class="ic16" viewBox="0 0 16 16"><path d="M.5.5h15v15H.5zM.5 3.500h15M.5 6.500h15M.5 9.500h15M.5 12.500h15M3.500.5v15M6.500.5v15M9.500.5v15M12.500.5v15" fill="#fff" stroke="#777"/><path d="M1 8h14v7H1z" fill="#445a88" opacity=".3"/></svg><svg class="caret"><use href="#i-caret"/></svg></button>
      <button class="mid" aria-label="Viewports"><svg class="ic16" viewBox="0 0 16 16"><path d="M.5 1.500h7v6h-7zM8.500 1.500h7v6h-7zM.5 8.500h7v6h-7zM8.500 8.500h7v6h-7z" fill="#a9c4ec" stroke="#27457c"/><path d="M2.500 3.500h3v2h-3zM10.500 3.500h3v2h-3zM2.500 10.500h3v2h-3zM10.500 10.500h3v2h-3z" fill="#cfdef5" stroke="#6288c4"/></svg><svg class="caret"><use href="#i-caret"/></svg></button>
    </div>
    <p class="hint">Multiple selections</p>
  </main>

  <footer class="timeline">
    <div class="play">
      <button aria-label="First"><svg width="14" height="14" viewBox="0 0 14 14"><path d="M0 0h2v14H0zM13 0v14L2 7z" fill="#4a4a4a"/></svg></button>
      <button aria-label="Back"><svg width="14" height="14" viewBox="0 0 14 14"><path d="M10 1v12L0 7zM11 4h2v6h-2z" fill="#4a4a4a"/></svg></button>
      <button aria-label="Play"><svg width="14" height="16" viewBox="0 0 14 16"><path d="M1 0v16l12-8z" fill="#4a4a4a"/></svg></button>
      <button aria-label="Forward"><svg width="14" height="14" viewBox="0 0 14 14"><path d="M4 1v12l10-6zM1 4h2v6H1z" fill="#4a4a4a"/></svg></button>
      <button aria-label="Last"><svg width="14" height="14" viewBox="0 0 14 14"><path d="M12 0h2v14h-2zM1 0v14l11-7z" fill="#4a4a4a"/></svg></button>
    </div>
    <div class="history">
      <ol>
        <li><svg class="ic16"><use href="#i-image"/></svg></li><li><svg class="ic16"><use href="#i-edit"/></svg></li>
        <li><svg class="marks"><use href="#i-marks"/></svg><svg class="ic16"><use href="#i-extrude"/></svg></li><li><svg class="ic16"><use href="#i-shell"/></svg></li>
        <li><svg class="marks"><use href="#i-marks"/></svg><svg class="ic16"><use href="#i-pipe"/></svg></li><li><svg class="ic16"><use href="#i-fillet"/></svg></li>
        <li><svg class="ic16"><use href="#i-fillet"/></svg></li><li><svg class="ic16"><use href="#i-plane"/></svg></li><li><svg class="ic16"><use href="#i-edit"/></svg></li>
        <li><svg class="marks"><use href="#i-marks"/></svg><svg class="ic16"><use href="#i-extrude"/></svg></li><li><svg class="ic16"><use href="#i-edit"/></svg></li>
        <li><svg class="marks"><use href="#i-marks"/></svg><svg class="ic16"><use href="#i-extrude"/></svg></li><li><svg class="ic16"><use href="#i-shell"/></svg></li>
        <li><svg class="ic16"><use href="#i-coil"/></svg></li><li><svg class="ic16"><use href="#i-edit"/></svg></li><li><svg class="ic16"><use href="#i-point"/></svg></li>
        <li><svg class="ic16"><use href="#i-oplane"/></svg></li><li><svg class="ic16"><use href="#i-sphere"/></svg></li><li><svg class="ic16"><use href="#i-path"/></svg></li>
        <li><svg class="ic16"><use href="#i-green"/></svg></li><li><svg class="ic16"><use href="#i-circ"/></svg></li><li><svg class="ic16"><use href="#i-pattern16"/></svg></li>
      </ol>
      <div class="rail"></div>
    </div>
    <svg class="marker" width="12" height="32" viewBox="0 0 12 32"><path d="M0 0h12v4L7 9v23H5V9L0 4z" fill="#666"/></svg>
    <button class="prefs" aria-label="Timeline settings"><svg class="ic16"><use href="#i-gear"/></svg></button>
  </footer>
</div>
</body>
</html>
```
FILE: styles.css
```css
* { box-sizing: border-box; }
body { margin: 0; font: 11px/14px "Liberation Sans", Arial, sans-serif; color: #333; background: #fff; }
button { font: inherit; color: inherit; border: 0; padding: 0; background: none; display: flex; align-items: center; justify-content: center; }
input, select { font: inherit; color: inherit; border-radius: 0; margin: 0; min-width: 0; }
a { color: inherit; text-decoration: none; }
h2, p, ul, ol { margin: 0; padding: 0; font-weight: normal; list-style: none; }
svg { display: block; flex: none; }
.defs { position: absolute; width: 0; height: 0; }
.ic10 { width: 10px; height: 10px; }
.ic16 { width: 16px; height: 16px; }
.ic32 { width: 32px; height: 32px; }
.caret { width: 6px; height: 5px; }
.grey { color: #999; }

.app { display: flex; flex-direction: column; min-height: 100vh; }

.titlebar { display: flex; align-items: center; height: 23px; padding: 0 12px 0 3px; }
.app-name { flex: 1; margin-left: 4px; font: 12px/16px Roboto, sans-serif; color: #999; }
.win { width: 45px; height: 20px; padding-bottom: 3px; }
.win:last-child { width: 26px; margin-left: 10px; }

.tabbar { display: flex; align-items: flex-end; height: 32px; background: #ccc; }
.quick { display: flex; align-items: center; width: 193px; height: 32px; padding-left: 8px; }
.quick button { width: 33px; height: 24px; gap: 8px; justify-content: flex-start; }
.quick .drop { width: 40px; color: #666; }
.quick .file { width: 46px; gap: 5px; }
.quick .faded { opacity: .5; }
.tabs { flex: 1; display: flex; gap: 4px; height: 28px; }
.tab { flex: 1; display: flex; align-items: center; padding-right: 6px; border-radius: 4px 4px 0 0; background: #bababa; color: #666; font-size: 12px; }
.tab a { flex: 1; display: flex; align-items: center; justify-content: center; gap: 4px; padding: 1px 0 0 2px; }
.tab a svg { opacity: .6; }
.tab.current { background: #f1f1f1; color: #333; }
.tab.current a svg { opacity: 1; }
.new { width: 28px; background: #bababa; border-radius: 4px 4px 0 0; }
.status { display: flex; align-items: center; width: 214px; height: 32px; padding: 0 0 0 4px; }
.status button { width: 33px; flex: none; }
.status .avatar { width: 25px; height: 25px; margin-left: 9px; border-radius: 50%; background: #eee; font-size: 10px; color: #555; }

.ribbon { display: flex; height: 82px; background: #f1f1f1; border-bottom: 1px solid #dcdcdc; font-size: 10px; line-height: 12px; }
.workspace { width: 110px; height: 62px; margin: 10px 7px 0 11px; gap: 5px; border: 2px solid #dcdcdc; border-radius: 4px; font-weight: bold; }
.ribbon-main { flex: 1; }
.modes { display: flex; height: 24px; padding-left: 10px; }
.modes a { margin-right: 36px; padding: 6px 0 0; }
.modes .on { padding: 6px 12px 0; color: #0696d7; border-bottom: 3px solid #0696d7; }
.modes a:nth-child(n+2) { margin-right: 46px; }
.groups { display: flex; margin-top: 2px; }
.group { display: flex; flex-direction: column; align-items: center; gap: 7px; height: 52px; padding: 0 10px 0 11px; border-right: 1px solid #d8d8d8; }
.group.first { padding-left: 9px; }
.group.single { padding: 0 13px 0 12px; }
.group.last { border: 0; }
.icons { display: flex; gap: 11px; padding-top: 1px; }
.group button { gap: 3px; }

.canvas { position: relative; flex: 1; min-height: 520px; }
.scene { position: absolute; width: 100%; height: 100%; }
.cube-top, .cube-front { font-weight: bold; fill: #999; text-anchor: middle; }
.cube-front { font-size: 9px; fill: #aaa; }
.axis-z { font-size: 14px; fill: #9090ff; }
.axis-x { font-size: 14px; fill: #f99; }

.palette { display: flex; align-items: center; height: 26px; padding-right: 1px; border: 1px solid #c8c8c8; background: #f1f1f1; }
.palette h2 { flex: 1; font-size: 10px; color: #555; }
.dot { width: 10px; height: 10px; }
.grip { width: 3px; height: 12px; border: solid #777; border-width: 0 1px; }

.browser, .comments { position: absolute; left: 4px; width: 300px; }
.browser { top: 4px; }
.browser .palette { padding-left: 4px; }
.browser h2 { margin-left: 10px; }
.browser .dot, .comments .dot { margin-right: 6px; }
.comments { bottom: 4px; padding-left: 24px; padding-top: 2px; border-top: 0; }
.tree { display: flex; flex-direction: column; gap: 4px; margin-top: 4px; }
.tree li { display: flex; align-items: center; gap: 8px; height: 20px; padding-left: 36px; }
.tree .root { padding-left: 16px; gap: 8px; }
.chip { display: flex; align-items: center; height: 20px; padding: 0 11px 0 3px; background: #f1f1f1; }
.chip > span { margin-left: 14px; }
.root .chip > .doc { display: flex; align-items: center; gap: 14px; margin: 0 4px 0 6px; padding: 0 13px 0 3px; background: #d6d6d6; color: #fff; }
.root .chip { padding-right: 7px; }
.root input { appearance: none; width: 13px; height: 13px; border: 1px solid #222; border-radius: 50%; background: radial-gradient(#222 0 2px, #fff 3px); }
.tri { width: 10px; height: 14px; }
.eye { width: 16px; height: 12px; }
.folder { width: 16px; height: 13px; }
.item { display: flex; align-items: center; gap: 14px; height: 20px; margin-left: 9px; }
.item.hatched { margin: 0 -10px 0 6px; padding: 0 10px 0 3px; background: repeating-linear-gradient(135deg, #7d8fae 0 2px, transparent 2px 5px) 0 16px / 100% 4px no-repeat; }

.feature { position: absolute; top: 124px; right: 4px; width: 250px; border: 1px solid #c8c8c8; background: #f1f1f1; }
.feature .palette { height: 24px; padding: 0 4px 0 1px; border-width: 0 0 1px; gap: 7px; }
.feature .palette h2 { margin-left: -4px; }
.rows { display: grid; grid-template-columns: 83px 121px; grid-auto-rows: 30px; align-items: center; padding-left: 12px; }
.pick { display: grid; grid-template-columns: 22px 1fr 11px; align-items: center; height: 26px; border: 1px solid #dcdcdc; background: #fff; }
.pick > * { grid-row: 1; }
.pick .ic16 { grid-column: 1; margin-left: 3px; z-index: 1; }
.pick .caret { grid-column: 3; }
.pick select { grid-column: 1 / 4; appearance: none; width: 100%; height: 24px; border: 0; background: none; padding: 0 12px 0 22px; }
.selrow { display: flex; align-items: center; gap: 10px; }
.sel { width: 78px; height: 26px; gap: 4px; border: 1px solid #dcdcdc; background: #fff; }
.sel.on { background: #0696d7; border-color: #0696d7; color: #fff; }
.check { appearance: none; width: 13px; height: 13px; margin-left: 5px; border: 1px solid #444; border-radius: 3px; background: #ccc; display: grid; place-items: center; }
.check::before { content: ""; width: 4px; height: 8px; border: solid #111; border-width: 0 1px 1px 0; transform: rotate(40deg); }
.text { width: 121px; height: 26px; padding: 0 3px; border: 1px solid #c8c8c8; background: #fff; }
.spin { display: flex; height: 26px; border: 1px solid #c8c8c8; background: #fff; }
.spin input { flex: 1; width: 20px; border: 0; padding: 0 3px; }
.steps { display: flex; flex-direction: column; gap: 1px; background: #ccc; }
.steps button { flex: 1; width: 13px; background: #eaeaea; }
.steps svg { width: 4px; height: 3px; }
.feature footer { display: flex; align-items: center; gap: 10px; height: 37px; padding: 0 11px 0 8px; border-top: 1px solid #c8c8c8; }
.feature footer svg { margin-right: auto; }
.feature footer button { width: 60px; height: 19px; border: 1px solid #aaa; background: #e8e8e8; color: #666; font-size: 12px; }

.mini { position: absolute; left: 74.9%; top: 78.5%; display: flex; align-items: center; width: 176px; height: 22px; background: #f1f1f1; }
.mini-dist { width: 69px; height: 20px; margin: 0 10px 0 2px; padding: 2px 3px; border: 1px solid #c8c8c8; background: #fff; }
.mini-dist input { display: block; width: 61px; height: 14px; padding: 0; border: 0; background: #0078d7; color: #fff; }
.mini .spin { width: 69px; height: 22px; margin-left: auto; }

.viewbar { position: absolute; left: 50%; bottom: 4px; transform: translateX(-50%); display: flex; align-items: center; height: 24px; padding-left: 5px; background: #f1f1f1; }
.viewbar button { width: 26px; justify-content: flex-start; color: #222; gap: 4px; }
.viewbar .wide { width: 33px; gap: 5px; }
.viewbar .mid { width: 31px; gap: 3px; }
.viewbar .mid:last-child { width: 28px; }
.hint { position: absolute; right: 16px; bottom: 9px; font-weight: bold; font-size: 12px; color: #222; }

.timeline { display: flex; align-items: flex-start; height: 51px; background: #f1f1f1; border-top: 2px solid #c8c8c8; border-bottom: 1px solid #2a1d20; }
.play { display: flex; height: 48px; padding-left: 4px; margin-right: 13px; align-items: center; }
.play button { width: 25px; }
.history ol { display: flex; }
.history li { display: flex; flex-direction: column; align-items: center; justify-content: flex-end; gap: 3px; width: 24px; height: 39px; padding-top: 6px; }
.history li::after { content: ""; width: 2px; height: 5px; background: #c8c8c8; }
.marks { width: 16px; height: 6px; }
.rail { height: 2px; margin: 0 11px; background: #c8c8c8; }
.marker { margin: 9px 0 0 -6px; }
.prefs { margin: 16px 13px 0 auto; color: #777; }
```
